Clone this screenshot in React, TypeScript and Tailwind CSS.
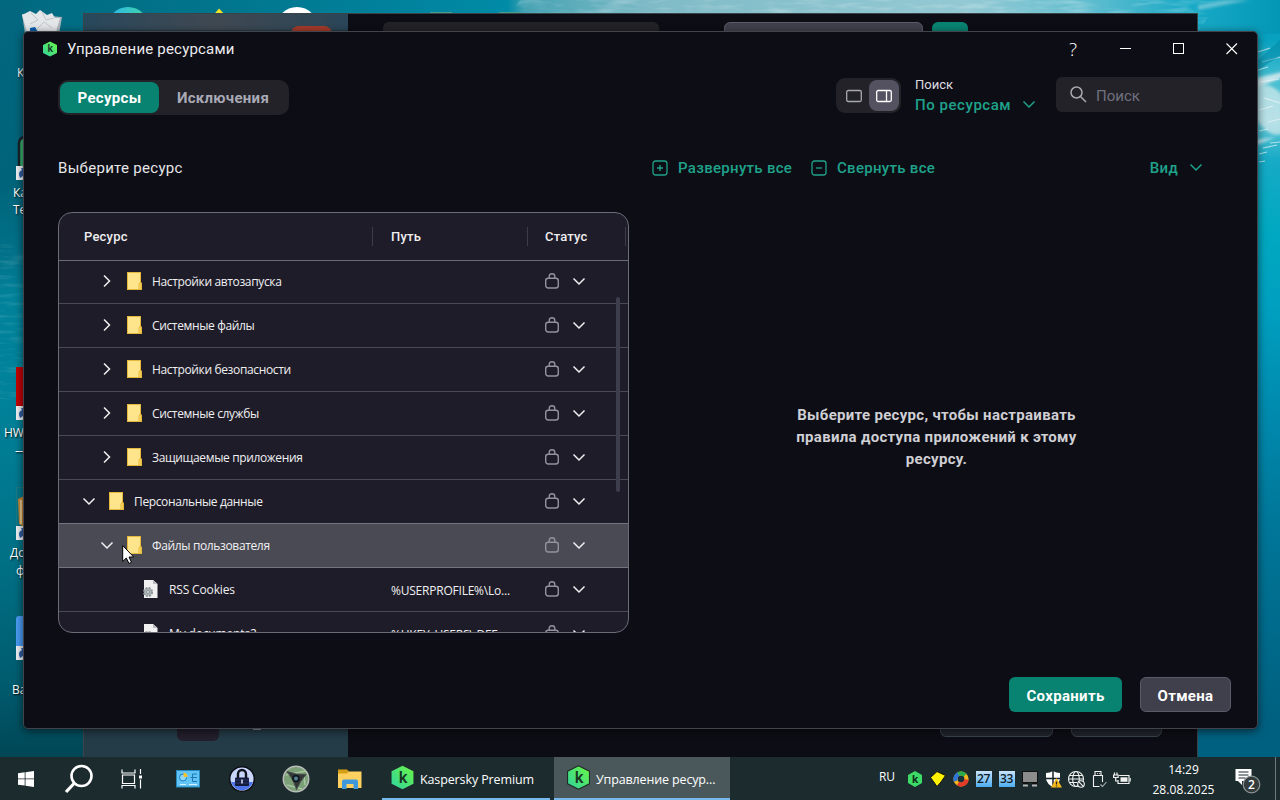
import { ReactNode } from "react";
import clsx from "clsx";

interface IResource {
  name: string;
  level: number;
  open?: boolean;
  file?: boolean;
  path?: string;
  selected?: boolean;
}

const resources: IResource[] = [
  { name: "Настройки автозапуска", level: 2 },
  { name: "Системные файлы", level: 2 },
  { name: "Настройки безопасности", level: 2 },
  { name: "Системные службы", level: 2 },
  { name: "Защищаемые приложения", level: 2 },
  { name: "Персональные данные", level: 1, open: true },
  { name: "Файлы пользователя", level: 2, open: true, selected: true },
  { name: "RSS Cookies", level: 3, file: true, path: "%USERPROFILE%\\Lo..." },
  { name: "My documents2", level: 3, file: true, path: "%HKEY_USERS\\.DEF..." },
];

const Wallpaper = () => (
  <svg className="absolute inset-0" width="1280" height="800" viewBox="0 0 1280 800">
    <defs>
      <linearGradient id="left" x1="0" y1="0" x2="0" y2="1">
        <stop offset="0" stopColor="#026880" />
        <stop offset="0.22" stopColor="#006379" />
        <stop offset="0.32" stopColor="#007189" />
        <stop offset="0.37" stopColor="#01829a" />
        <stop offset="0.5" stopColor="#00829a" />
        <stop offset="0.7" stopColor="#007085" />
        <stop offset="0.85" stopColor="#005c6f" />
        <stop offset="0.95" stopColor="#004655" />
      </linearGradient>
      <linearGradient id="top" x1="0" y1="0" x2="1" y2="0">
        <stop offset="0" stopColor="#006a81" />
        <stop offset="0.15" stopColor="#01758c" />
        <stop offset="0.3" stopColor="#01829d" />
        <stop offset="0.385" stopColor="#018ba6" />
        <stop offset="0.4" stopColor="#47a3b3" />
        <stop offset="0.5" stopColor="#7fbbc7" />
        <stop offset="0.75" stopColor="#93c9d3" />
        <stop offset="0.84" stopColor="#67bfd0" />
        <stop offset="0.93" stopColor="#18a9c6" />
        <stop offset="1" stopColor="#0397b6" />
      </linearGradient>
      <linearGradient id="right" x1="0" y1="0" x2="0" y2="1">
        <stop offset="0" stopColor="#0397b6" />
        <stop offset="0.05" stopColor="#08a2c0" />
        <stop offset="0.1" stopColor="#46bed1" />
        <stop offset="0.15" stopColor="#66c8d6" />
        <stop offset="0.2" stopColor="#16aac6" />
        <stop offset="0.29" stopColor="#00a8c0" />
        <stop offset="0.38" stopColor="#00a0c0" />
        <stop offset="0.5" stopColor="#008cb0" />
        <stop offset="0.65" stopColor="#007799" />
        <stop offset="0.9" stopColor="#006080" />
      </linearGradient>
      <filter id="grain" x="0" y="0" width="100%" height="100%">
        <feTurbulence type="fractalNoise" baseFrequency="0.03 0.2" numOctaves="3" seed="4" />
        <feColorMatrix values="0 0 0 0 1  0 0 0 0 1  0 0 0 0 1  3 0 0 0 -1.4" />
      </filter>
      <filter id="soft">
        <feGaussianBlur stdDeviation="1.6" />
      </filter>
    </defs>
    <rect width="640" height="800" fill="url(#left)" />
    <rect x="640" width="640" height="800" fill="url(#right)" />
    <rect x="24" width="1256" height="34" fill="url(#top)" />
    <g opacity="0.22">
      <rect x="520" width="700" height="34" filter="url(#grain)" transform="skewX(-35)" />
    </g>
    <g opacity="0.1">
      <rect y="240" width="24" height="160" filter="url(#grain)" />
    </g>
    <g filter="url(#soft)" fill="#e3eef0">
      <path d="M1256 78 L1282 72 V78 L1256 88z" opacity="0.8" />
      <path d="M1256 88 Q1270 80 1282 95 V134 Q1268 138 1256 118z" opacity="0.65" />
      <path d="M1256 140 L1276 137 L1256 145z" opacity="0.8" />
      <path d="M1198 10 L1250 0 H1225 L1198 5z" opacity="0.4" />
    </g>
    <g stroke="#eef6f7" strokeWidth="1.200" opacity="0.65">
      <path d="M1258 52 l12 -4 M1262 62 l18 -5 M1258 70 l10 -3 M1259 82 l20 -3 M1264 98 l16 5 M1259 110 l14 -4 M1268 122 l12 -3" />
      <path d="M1259 131 l9 -2 M1263 148 l14 -3 M1259 154 l8 -2 M1270 143 l10 -1 M1259 162 l6 -1" />
    </g>
    <path d="M1258 60 L1280 40 V56 L1258 70z" fill="#0086a4" opacity="0.5" />
  </svg>
);

const DesktopIcons = () => (
  <svg
    className="absolute inset-0"
    width="1280"
    height="757"
    viewBox="0 0 1280 757"
    fontFamily="'Open Sans', 'Noto Sans', sans-serif"
    fontSize="12"
  >
    <defs>
      <linearGradient id="disc">
        <stop offset="0" stopColor="#2bb6ee" />
        <stop offset="1" stopColor="#42d6a4" />
      </linearGradient>
    </defs>
    <path d="M22 14 L62 17 L58 40 H26z" fill="#a9b4bb" />
    <path d="M22 15 L30 11 L36 14 L40 10 L47 15 L52 13 L55 18 L60 18 L56 32 H27z" fill="#e3e6e8" />
    <path d="M31 13 L38 20 L30 24 M42 12 L46 20 L54 18 M37 29 L44 22 L52 28" stroke="#bfc5c9" fill="none" />
    <path d="M30 28 L35 27 L38 32 H30z" fill="#0a5eae" />
    <circle cx="128" cy="28" r="21" fill="url(#disc)" />
    <path d="M211 18 L219 8.500 L228 18z" fill="#f5e32a" />
    <circle cx="297" cy="28" r="21" fill="#fff" />
    <path d="M430 12.500 h22 M499 12.500 h22" stroke="#4c9b8c" />
    <rect x="19" y="137" width="20" height="42" rx="6" fill="#37b36f" stroke="#16222a" strokeWidth="2.500" />
    <rect x="16" y="367" width="20" height="40" fill="#c00303" />
    <path d="M16.500 527 V487.500 H24" stroke="#2b7a80" fill="none" opacity="0.7" />
    <path d="M18 499 L24 496 V527 L19 524z" fill="#c98a35" />
    <path d="M21 500 V524" stroke="#f0dcae" strokeWidth="1.500" />
    <rect x="16" y="616" width="20" height="40" rx="3" fill="#4a9cf5" />
    {[166, 406, 526, 646].map((y) => (
      <g key={y}>
        <rect x="16" y={y} width="12" height="14" fill="#eef1f5" />
        <path d={`M20 ${y + 12} Q17 ${y + 6} 22 ${y + 4} L21 ${y + 2} H26 V${y + 8}`} fill="#2f5fa5" />
      </g>
    ))}
    <g fill="#fff" style={{ textShadow: "1px 1px 2px #000" }}>
      <text x="17" y="77">К</text>
      <text x="13" y="197">Ка</text>
      <text x="13" y="214">Те</text>
      <text x="4" y="437">HW</text>
      <text x="15" y="455">—</text>
      <text x="10" y="557">До</text>
      <text x="16" y="575">ф</text>
      <text x="12" y="694">Ва</text>
    </g>
  </svg>
);

// main application window, almost fully covered by the dialog
const BackWindow = () => (
  <div className="absolute left-[83px] top-[13px] flex h-[744px] w-[1115px] border border-b-0 border-[#3b4449] bg-[#0d0d15]">
    <div className="flex w-[264px] flex-col justify-between bg-[#243b48]">
      <div className="flex h-4 justify-end bg-linear-to-r from-[#28485c] via-[#3f4851] to-[#2a4658] pr-4">
        <div className="mt-3 h-5 w-[41px] rounded-lg bg-[#a33a2a]" />
      </div>
      <div className="mb-4 ml-[93px] flex h-8 w-[84px] items-end">
        <div className="h-8 w-11 rounded-md bg-[#231f2c]" />
        <div className="mb-[11px] ml-[34px] h-2 w-2 shrink-0 bg-[#8d949a]" />
      </div>
    </div>
    <div className="flex flex-1 flex-col justify-between">
      <div className="flex pl-[35px] pt-2">
        <div className="h-8 w-[276px] rounded-md bg-[#232327]" />
        <div className="ml-[65px] h-8 w-[199px] rounded-md border border-[#5b5a6b] bg-[#40404c]" />
        <div className="ml-[9px] h-8 w-9 rounded-md bg-[#088371]" />
      </div>
      <div className="mb-5 mr-[35px] flex justify-end gap-[18px]">
        <div className="h-8 w-[113px] rounded-md border border-[#3a424b] bg-[#20242c]" />
        <div className="h-8 w-[91px] rounded-md border border-[#3a424b] bg-[#20242c]" />
      </div>
    </div>
  </div>
);

const KLogo = ({ size, dark }: { size: number; dark?: boolean }) => (
  <svg width={size} height={size} viewBox="0 0 24 24" className="shrink-0">
    <defs>
      <linearGradient id="klogo" x1="1" y1="0" x2="0" y2="1">
        <stop offset="0" stopColor="#6cf545" />
        <stop offset="1" stopColor="#2ed3a0" />
      </linearGradient>
    </defs>
    <path
      d="M12 0.800 L22.500 6 V18 L12 23.200 L1.500 18 V6z"
      fill="url(#klogo)"
      stroke={dark ? "#1d2b22" : "none"}
      strokeLinejoin="round"
    />
    <text x="12.600" y="17" textAnchor="middle" fontFamily="Inter, sans-serif" fontWeight="600" fontSize="15" fill="#173522">
      k
    </text>
  </svg>
);

const Chevron = ({ right, className }: { right?: boolean; className?: string }) => (
  <svg
    width="16"
    height="16"
    viewBox="0 0 16 16"
    fill="none"
    stroke="currentColor"
    strokeWidth="1.500"
    className={clsx("shrink-0", className)}
  >
    <path d={right ? "M5 2.500 L10.500 8 L5 13.500" : "M2.500 5.500 L8 11 L13.500 5.500"} />
  </svg>
);

const FolderIcon = () => (
  <svg width="15" height="18" viewBox="0 0 15 18" className="mb-px shrink-0">
    <path d="M0 0 H14 V10 L15 11 V18 H0z" fill="#e3b83c" />
    <path d="M1 1 H13 V10 L11.500 12 V17 H1z" fill="#fee48a" />
    <path d="M12 12 L14 11 V17 H12z" fill="#f3cc58" />
  </svg>
);

const FileIcon = () => (
  <svg width="16" height="18" viewBox="0 0 16 18" className="mb-px shrink-0">
    <path d="M2 0 H11 L15.500 4 V18 H2z" fill="#f1f1f1" />
    <path d="M11 0 L15.500 4 H11z" fill="#b9bcbe" />
    <circle cx="6" cy="12" r="4" fill="#b4babd" stroke="#8f979b" strokeWidth="2.200" strokeDasharray="2 1.140" />
    <circle cx="6" cy="12" r="1.500" fill="#e6e8e9" stroke="#879095" />
  </svg>
);

const LockIcon = () => (
  <svg width="14" height="17" viewBox="0 0 14 17" fill="none" stroke="#92929d" strokeWidth="1.400" className="mb-0.5 shrink-0">
    <rect x="0.700" y="6.300" width="12.600" height="9.700" rx="2.500" />
    <path d="M4.200 6 V4.500 a2.800 2.800 0 0 1 5.600 0 V6" />
  </svg>
);

const ResourceRow = ({ item }: { item: IResource }) => {
  return (
    <div
      className={clsx(
        "flex h-11 shrink-0 items-center border-b font-['Open_Sans','Noto_Sans',sans-serif] text-[12px] text-[#f0f0f2]",
        item.selected ? "border-[#747480] bg-[#4a4a54]" : "border-[#4a4955]",
        item.open && !item.selected && "border-[#747480]"
      )}
    >
      <div
        className={clsx(
          "flex w-[332px] items-center",
          item.level === 1 && "pl-[22px]",
          item.level === 2 && "pl-10",
          item.level === 3 && "pl-[83px]"
        )}
      >
        {!item.file && <Chevron right={!item.open} className="mb-0.5 mr-3" />}
        {item.file ? <FileIcon /> : <FolderIcon />}
        <span
          className={clsx(
            "whitespace-nowrap",
            item.file ? "ml-[11px] tracking-[-0.15px]" : "ml-2.5 tracking-[-0.36px]"
          )}
        >
          {item.name}
        </span>
      </div>
      <div className="w-[154px] whitespace-nowrap pt-0.5 tracking-[-0.22px]">{item.path}</div>
      <div className="flex items-center gap-3">
        <LockIcon />
        <Chevron className="mb-0.5" />
      </div>
    </div>
  );
};

const ResourceTable = () => (
  <div className="relative flex h-[421px] w-[571px] flex-col overflow-hidden rounded-[14px] border border-[#6c6b78] bg-[#1e1c28]">
    <div className="relative z-10 flex h-12 shrink-0 items-center border-b border-[#6c6b78] text-[13px] font-medium tracking-[0.2px] text-[#eeeef0]">
      <div className="flex h-[19px] w-[314px] items-center border-r border-[#3c3b47] pl-[25px]">Ресурс</div>
      <div className="flex h-[19px] w-[155px] items-center border-r border-[#3c3b47] pl-[18px]">Путь</div>
      <div className="flex h-[19px] w-[98px] items-center border-r border-[#3c3b47] pl-[17px]">Статус</div>
    </div>
    <div className="-mt-px flex flex-col">
      {resources.map((item) => (
        <ResourceRow key={item.name} item={item} />
      ))}
    </div>
    <div className="absolute right-2 top-[84px] h-[195px] w-1 rounded-full bg-[#3e3d4e]" />
  </div>
);

const TitleBar = () => (
  <div className="flex h-[34px] items-center pl-[18px] text-white">
    <KLogo size={16} />
    <span className="ml-[9px] text-[15px] tracking-[0.2px] text-[#ececee]">Управление ресурсами</span>
    <div className="ml-auto mr-[17px] flex items-center gap-[37px]">
      <span className="w-4 text-center font-['Open_Sans',sans-serif] text-[19px] font-light">?</span>
      <svg width="16" height="16" viewBox="0 0 16 16" stroke="currentColor" fill="none" shapeRendering="crispEdges">
        <path d="M2 7.500 h11" />
      </svg>
      <svg width="16" height="16" viewBox="0 0 16 16" stroke="currentColor" fill="none">
        <rect x="2.500" y="2.500" width="10" height="10" />
      </svg>
      <svg width="16" height="16" viewBox="0 0 16 16" stroke="currentColor" strokeWidth="1.100" fill="none">
        <path d="M2.500 2.500 L13 13 M13 2.500 L2.500 13" />
      </svg>
    </div>
  </div>
);

const Toolbar = () => (
  <div className="flex pl-[34px] pr-[35px]">
    <div className="mt-3.5 flex h-[35px] w-[231px] items-center rounded-[10px] bg-[#222228] p-0.5 text-[15px] font-bold tracking-[0.3px]">
      <button className="h-[31px] w-[99px] rounded-lg bg-[#088371] pt-0.5 text-white">Ресурсы</button>
      <button className="h-[31px] flex-1 pt-0.5 text-[#a9aab5]">Исключения</button>
    </div>
    <div className="ml-auto mt-3 flex h-[35px] w-[65px] items-center rounded-[9px] bg-[#222228] p-0.5">
      <div className="flex h-[31px] w-[31px] items-center justify-center pl-px">
        <svg width="16" height="14" viewBox="0 0 16 14" fill="none" stroke="#a9a9b2" strokeWidth="1.300">
          <rect x="0.700" y="1.500" width="14.600" height="11" rx="1.500" />
        </svg>
      </div>
      <div className="flex h-[31px] w-[31px] items-center justify-center rounded-lg bg-[#545260] pl-px">
        <svg width="16" height="14" viewBox="0 0 16 14" fill="none" stroke="#fff" strokeWidth="1.300">
          <rect x="0.700" y="1.500" width="14.600" height="11" rx="1.500" />
          <path d="M10.500 1.500 V12.500" />
        </svg>
      </div>
    </div>
    <div className="ml-3.5 mt-2.5 w-[141px]">
      <div className="text-[13px] leading-[18px] text-[#dcdce0]">Поиск</div>
      <div className="flex items-center whitespace-nowrap text-[15px] font-medium leading-[22px] tracking-[0.55px] text-[#1fa28a]">
        По ресурсам
        <Chevron className="mb-0.5 ml-2.5" />
      </div>
    </div>
    <div className="mt-[11px] flex h-[35px] w-[166px] items-center rounded-md bg-[#222228] pl-3.5 text-[15px] text-[#71717e]">
      <svg width="17" height="17" viewBox="0 0 17 17" fill="none" stroke="#a9a9b2" strokeWidth="1.500" className="mr-[9px]">
        <circle cx="6.500" cy="6.500" r="5.500" />
        <path d="M10.500 10.500 L16 16" />
      </svg>
      <span className="pt-[3px]">Поиск</span>
    </div>
  </div>
);

const SquareIcon = ({ plus }: { plus?: boolean }) => (
  <svg width="16" height="16" viewBox="0 0 16 16" fill="none" stroke="currentColor" strokeWidth="1.300" className="mb-px">
    <rect x="1" y="1" width="14" height="14" rx="2.500" />
    <path d={plus ? "M5 8 h6 M8 5 v6" : "M5 8 h6"} />
  </svg>
);

const ResourceDialog = () => (
  <div className="absolute left-[23px] top-[31px] flex h-[698px] w-[1235px] flex-col rounded-[5px] border border-[#43434c] bg-[#0d0d15] font-[Roboto,'Liberation_Sans',sans-serif] shadow-[0_2px_8px_rgba(0,0,0,0.6)]">
    <TitleBar />
    <Toolbar />
    <div className="mt-10 flex h-6 items-center pl-[34px] pr-[53px] text-[15px] font-medium tracking-[0.3px] text-[#1fa28a]">
      <span className="w-[594px] font-normal text-[#e6e6e9]">Выберите ресурс</span>
      <SquareIcon plus />
      <span className="ml-2.5 w-[133px]">Развернуть все</span>
      <SquareIcon />
      <span className="ml-2.5">Свернуть все</span>
      <span className="ml-auto">Вид</span>
      <Chevron className="mb-0.5 ml-2.5" />
    </div>
    <div className="mt-8 flex px-[34px]">
      <ResourceTable />
      <div className="flex flex-1 items-center justify-center pl-[21px] pt-7">
        <p className="w-[300px] text-center text-[15px] font-bold leading-[22px] tracking-[0.3px] text-[#cfcfd4]">
          Выберите ресурс, чтобы настраивать правила доступа приложений к этому ресурсу.
        </p>
      </div>
    </div>
    <div className="mt-11 flex justify-end gap-[18px] pr-[26px] text-[15px] font-bold tracking-[0.33px] text-white">
      <button className="h-[35px] w-[113px] rounded-md bg-[#088371] pt-[3px]">Сохранить</button>
      <button className="h-[35px] w-[91px] rounded-md border border-[#5b5a6b] bg-[#40404c] pt-[3px]">Отмена</button>
    </div>
  </div>
);

const TrayItem = ({ children }: { children: ReactNode }) => (
  <div className="flex w-[23px] shrink-0 items-center justify-center">
    <svg width="18" height="18" viewBox="0 0 18 18">
      {children}
    </svg>
  </div>
);

const Tray = () => (
  <div className="flex items-center pt-px">
    <TrayItem>
      <path d="M9 1 L16 5 V13 L9 17 L2 13 V5z" fill="#3ddc66" />
      <text x="9.300" y="13" textAnchor="middle" fontSize="11" fontWeight="700" fill="#10301c" fontFamily="Inter, sans-serif">
        k
      </text>
    </TrayItem>
    <TrayItem>
      <path d="M1.500 7.500 L8 1.500 L16.500 5.500 L12 12 L8 16.500z" fill="#fff200" stroke="#111" />
    </TrayItem>
    <TrayItem>
      <g fill="none" strokeWidth="4.200">
        <circle cx="9" cy="9" r="5.500" stroke="#f5b41d" />
        <path d="M3.800 11 A5.500 5.500 0 0 1 6.500 4.100" stroke="#2a74dc" />
        <path d="M6.500 4.100 A5.500 5.500 0 0 1 13 5.200" stroke="#2bab4d" />
        <path d="M14.500 9.500 A5.500 5.500 0 0 1 6 13.600" stroke="#e23b2a" />
      </g>
      <circle cx="9" cy="9" r="2.400" fill="#14323f" />
    </TrayItem>
    {["27", "33"].map((value) => (
      <div
        key={value}
        className="mx-[3.5px] flex h-4 w-4 items-center justify-center bg-linear-to-b from-[#c8e2fa] to-[#49aef0] font-['Open_Sans',sans-serif] text-[12px] font-semibold tracking-[-0.3px] text-[#0b1b28]"
      >
        {value}
      </div>
    ))}
    <TrayItem>
      <rect x="1.500" y="1.500" width="15" height="11" fill="#8c8c8c" stroke="#111" />
      <path d="M2 15.500 h5 M11 15.500 h5" stroke="#b5b5b5" strokeWidth="2" />
      <path d="M2 13.500 h5 v1 M11 13.500 h5" stroke="#111" fill="none" />
    </TrayItem>
    <TrayItem>
      <path d="M2 3 Q6 3 9 1 Q12 3 16 3 V9 Q15 14 9 17 Q3 14 2 9z" fill="#fff" />
      <path d="M9 1 V17 M2 8.500 H16" stroke="#16232a" strokeWidth="1.500" />
      <path d="M12.500 8 L18 17.500 H7z" fill="#f8b81c" />
      <path d="M12.500 11.500 v3 M12.500 15.500 v1" stroke="#222" strokeWidth="1.300" />
    </TrayItem>
    <TrayItem>
      <g fill="none" stroke="#f0f0f0" strokeWidth="1.100">
        <circle cx="9" cy="9" r="7.500" />
        <ellipse cx="9" cy="9" rx="3.300" ry="7.500" />
        <path d="M1.500 9 h15 M2.500 5.500 h13 M2.500 12.500 h8" />
        <circle cx="14" cy="14" r="3.300" fill="#1b2b2e" />
        <path d="M11.700 11.700 l4.600 4.600" />
      </g>
    </TrayItem>
    <TrayItem>
      <g fill="none" stroke="#f0f0f0" strokeWidth="1.100">
        <path d="M5 5.500 V1.500 h6 V5.500 M3.500 5.500 h9 V12 M3.500 5.500 V16.500 h6" />
        <path d="M7 3.500 h0.800 M9 3.500 h0.800" />
        <path d="M10.500 14.500 l2 2 l4 -4.500" stroke="#a9b1b3" />
      </g>
    </TrayItem>
    <TrayItem>
      <g fill="none" stroke="#f0f0f0" strokeWidth="1.200">
        <path d="M6 5.500 H16 V13.500 H5 V10" />
        <path d="M17.200 8 v3.500" />
        <path d="M1.500 2.500 v2 M4 2.500 v2 M0.600 5 h4.500 v2.500 h-4.500z M2.700 8 v3 h2" />
      </g>
      <rect x="7.500" y="7.300" width="7" height="4.500" fill="#f0f0f0" />
    </TrayItem>
  </div>
);

const Taskbar = () => (
  <div className="absolute bottom-0 left-0 flex h-[43px] w-full items-stretch bg-[#1b2b2e] font-['Open_Sans','Noto_Sans',sans-serif] text-[12px] text-white">
    <div className="flex w-[382px] items-center pl-[18px]">
      <svg width="16" height="16" viewBox="0 0 16 16" fill="#fff">
        <path d="M0 2.200 L6.700 1.300 V7.500 H0z M7.500 1.200 L16 0 V7.500 H7.500z M0 8.300 H6.700 V14.600 L0 13.700z M7.500 8.300 H16 V16 L7.500 14.800z" />
      </svg>
      <svg width="30" height="30" viewBox="0 0 30 30" fill="none" stroke="#fff" className="ml-[30px]">
        <circle cx="17.500" cy="12" r="10" strokeWidth="2.600" />
        <path d="M10 19.500 L2 28" strokeWidth="3.200" />
      </svg>
      <svg width="22" height="20" viewBox="0 0 22 20" fill="none" stroke="#fff" strokeWidth="1.200" className="ml-[27px]">
        <path d="M1 0.500 V4 H14 V0.500 M1 19.500 V16.500 H14 V19.500" />
        <path d="M1.500 6 h12 v8.500 h-12z M19.500 0 v5 M19.500 10.500 v9" />
        <path d="M18 6.500 h3 v3 h-3z" fill="#fff" stroke="none" />
      </svg>
      <svg width="24" height="18" viewBox="0 0 24 18" className="ml-[33px]">
        <rect x="0.500" y="0.500" width="23" height="16.500" fill="#62c4f6" stroke="#2589bd" />
        <circle cx="7" cy="7.500" r="3.500" fill="#8fd6fb" stroke="#1b7fc0" />
        <path d="M7.500 7 V2.500 A4.500 4.500 0 0 1 11.500 7z" fill="#f9c22b" />
        <path d="M14.500 7.500 h2 V4 h4.500 M16.500 7.500 h4.500 M16.500 7.500 v4 h4.500" stroke="#1c77b5" fill="none" />
        <path d="M4 14.500 h6 M13 14.500 h8" stroke="#d9f1ff" />
      </svg>
      <svg width="28" height="28" viewBox="0 0 28 28" className="ml-[28px]">
        <circle cx="14" cy="14" r="12.300" fill="#c9d6fb" stroke="#0c0f16" strokeWidth="1.500" />
        <path d="M3 17 A11.500 11.500 0 0 0 25 17z" fill="#4d74ea" />
        <path d="M10 13 V9 a4 4 0 0 1 8 0 V13" fill="none" stroke="#10131d" strokeWidth="2.400" />
        <rect x="7" y="12.500" width="14" height="8.500" rx="1" fill="#141b38" />
        <path d="M7 15 h14 M7 18 h14" stroke="#29376b" />
        <path d="M14 14.500 v4" stroke="#dfe5f5" strokeWidth="1.500" />
      </svg>
      <svg width="28" height="28" viewBox="0 0 28 28" className="ml-[26px]">
        <circle cx="14" cy="14" r="12.700" fill="#7b9f76" stroke="#b9bdb9" strokeWidth="1.500" />
        <path d="M4 10 L24 6 M5 20 L20 24 M22 10 L23 20" stroke="#a6c69f" strokeWidth="1.500" />
        <path d="M5 6.500 Q14 10 24 9.500 Q18 16 14.500 24.500 Q12 15 5 6.500z" fill="#32383a" stroke="#454c4c" />
        <circle cx="14" cy="13.500" r="3.800" fill="#11181b" />
        <circle cx="14" cy="13.500" r="2" fill="#56809a" />
      </svg>
      <svg width="26" height="20" viewBox="0 0 26 20" className="ml-[27px]">
        <path d="M1 0.500 H10 L12 2.500 H1z" fill="#dba10f" />
        <path d="M1 2.500 H24.500 V19 H1z" fill="#fdd060" />
        <path d="M1 2.500 H12 L10 4.500 H1z" fill="#dba10f" />
        <path d="M5 20 V12.500 Q5 10.500 7 10.500 H19 Q21 10.500 21 12.500 V20 H16.500 V15 H9.500 V20z" fill="#3f97dc" />
      </svg>
    </div>
    <div className="mr-1 flex w-[168px] items-center border-b-2 border-[#76b9ed] pl-2">
      <KLogo size={25} />
      <span className="ml-[5px] mt-1.5 whitespace-nowrap text-[12.5px] tracking-[-0.12px]">Kaspersky Premium</span>
    </div>
    <div className="flex w-44 items-center border-b-2 border-[#76b9ed] bg-[#4a585b] pl-3">
      <KLogo size={25} dark />
      <span className="ml-[5px] mt-1.5 whitespace-nowrap text-[12.5px] tracking-[-0.14px]">Управление ресур...</span>
    </div>
    <div className="mb-1 ml-auto mr-2 flex items-center text-[12px] tracking-[-0.1px]">RU</div>
    <Tray />
    <div className="flex w-[101px] flex-col items-center justify-center pt-[3px] leading-5">
      <span>14:29</span>
      <span className="tracking-[0.1px]">28.08.2025</span>
    </div>
    <div className="flex w-[41px] items-center">
      <svg width="30" height="28" viewBox="0 0 30 28" className="mt-[5px]">
        <path d="M1.500 2 H17.500 V14 H8 V18 L4 14 H1.500z" fill="#fff" />
        <path d="M4.500 5 h10 M4.500 8 h10 M4.500 11 h7" stroke="#1b2b2e" />
        <circle cx="17.500" cy="17.500" r="8.300" fill="#333b3d" stroke="#8d9496" strokeWidth="1.200" />
        <text x="17.500" y="22" textAnchor="middle" fontSize="12" fontWeight="600" fill="#fff">
          2
        </text>
      </svg>
    </div>
    <div className="w-[5px] border-l border-[#6f7a7c]" />
  </div>
);

const MouseCursor = () => (
  <svg className="absolute left-[122px] top-[545px]" width="13" height="20" viewBox="0 0 13 20">
    <path d="M0.700 0.500 V16.500 L4.300 13 L7 18.500 L9.500 17.300 L7 12 H11.700z" fill="#fff" stroke="#000" />
  </svg>
);

const App = () => {
  return (
    <div className="relative h-[800px] w-[1280px] overflow-hidden bg-[#006a81]">
      <Wallpaper />
      <DesktopIcons />
      <BackWindow />
      <ResourceDialog />
      <Taskbar />
      <MouseCursor />
    </div>
  );
};

export default App;
